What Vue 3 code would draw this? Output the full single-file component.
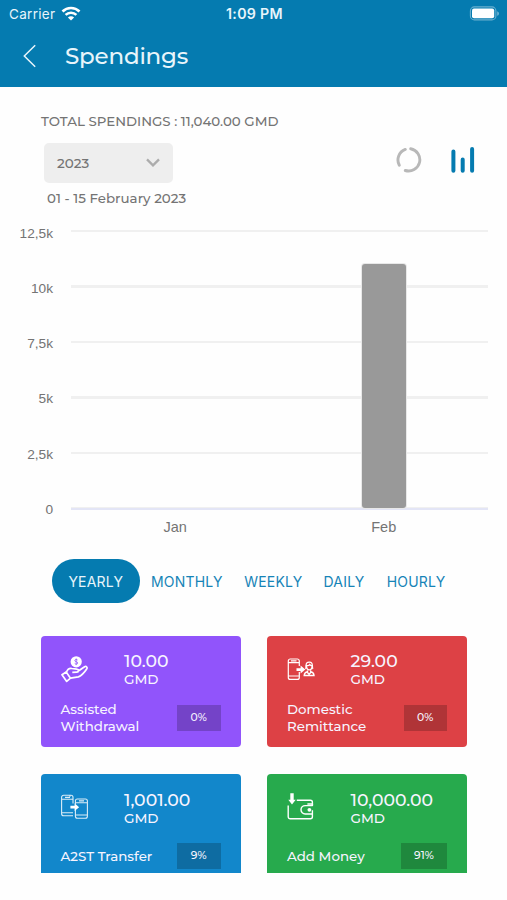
<script setup>
import { ref } from 'vue';

const activeTab = ref('YEARLY');
const tabs = ['YEARLY', 'MONTHLY', 'WEEKLY', 'DAILY', 'HOURLY'];

const ticks = ['12,5k', '10k', '7,5k', '5k', '2,5k', '0'];
const maxValue = 12500;
const months = [
  { label: 'Jan', value: 0 },
  { label: 'Feb', value: 10960 }
];

const cards = [
  { icon: 'hand', color: 'purple', amount: '10.00', label: 'Assisted Withdrawal', percent: '0%' },
  { icon: 'person', color: 'red', amount: '29.00', label: 'Domestic Remittance', percent: '0%' },
  { icon: 'phones', color: 'blue', amount: '1,001.00', label: 'A2ST Transfer', percent: '9%' },
  { icon: 'wallet', color: 'green', amount: '10,000.00', label: 'Add Money', percent: '91%' }
];

const barHeight = (value) => `${(value / maxValue) * 100}%`;
</script>

<template>
  <div class="screen">
    <header class="header">
      <div class="status-bar">
        <div class="carrier">
          <span>Carrier</span>
          <svg width="20" height="16" viewBox="0 0 20 16" fill="none" stroke="#fff">
            <path d="M1.5 5.4a12.3 12.3 0 0 1 17 0" stroke-width="2.7" />
            <path d="M4.6 8.9a7.8 7.8 0 0 1 10.8 0" stroke-width="2.6" />
            <path d="M10 14.6 6.9 11.5a4.4 4.4 0 0 1 6.2 0z" fill="#fff" stroke="none" />
          </svg>
        </div>
        <span class="time">1:09 PM</span>
        <div class="battery">
          <svg width="31" height="15" viewBox="0 0 31 15">
            <rect x="1.4" y=".9" width="25.5" height="13" rx="4" fill="none" stroke="#fff" stroke-opacity=".4" stroke-width="1.1" />
            <rect x="3" y="2.6" width="22.2" height="9.6" rx="2" fill="#fff" />
            <path d="M28.3 5.2c2 .8 2 3.8 0 4.6z" fill="#fff" fill-opacity=".5" />
          </svg>
        </div>
      </div>
      <div class="title-bar">
        <svg width="14" height="24" viewBox="0 0 14 24" fill="none" stroke="#e8f5fb" stroke-width="1.5">
          <path d="M13.2 1.3 2.3 12l10.9 10.7" />
        </svg>
        <h1>Spendings</h1>
      </div>
    </header>

    <section class="summary">
      <p class="total">TOTAL SPENDINGS : 11,040.00 GMD</p>
      <div class="controls">
        <button class="year-select">
          <span>2023</span>
          <svg width="14" height="9" viewBox="0 0 14 9" fill="none" stroke="#acacac" stroke-width="2.3">
            <path d="M1 1.4 7 7.4l6-6" />
          </svg>
        </button>
        <div class="chart-types">
          <svg width="26" height="26" viewBox="0 0 26 26" fill="none" stroke="#b8b8b8" stroke-width="2.9" stroke-linecap="round">
            <path d="M14.7 1.8a11.2 11.2 0 1 1-5.4 21.7" />
            <path d="M9.3 2.4a11.2 11.2 0 0 0-6 15.8" />
          </svg>
          <svg width="26" height="28" viewBox="0 0 26 28" fill="none" stroke="#057bb0" stroke-width="4" stroke-linecap="round">
            <path d="M3.4 5.6v19.2M12.7 13.5v11.3M22.1 2.9v21.9" />
          </svg>
        </div>
      </div>
      <p class="range">01 - 15 February 2023</p>
    </section>

    <section class="chart">
      <div class="y-axis">
        <span v-for="tick in ticks" :key="tick">{{ tick }}</span>
      </div>
      <div class="plot-column">
        <div class="plot">
          <div v-for="month in months" :key="month.label" class="slot">
            <div v-if="month.value" class="bar" :style="{ height: barHeight(month.value) }"></div>
          </div>
        </div>
        <div class="x-axis">
          <span v-for="month in months" :key="month.label">{{ month.label }}</span>
        </div>
      </div>
    </section>

    <nav class="tabs">
      <button
        v-for="tab in tabs"
        :key="tab"
        :class="['tab', tab.toLowerCase(), { active: activeTab === tab }]"
        @click="activeTab = tab"
      >
        {{ tab }}
      </button>
    </nav>

    <section class="cards">
      <article v-for="card in cards" :key="card.label" :class="['card', card.color]">
        <div class="card-top">
          <div class="icon">
            <svg v-if="card.icon === 'hand'" width="28" height="28" viewBox="0 0 28 28" fill="none" stroke="#fff" stroke-width="1.7" stroke-linejoin="round">
              <circle cx="15.2" cy="6.8" r="5.6" fill="#fff" stroke="none" />
              <path d="M16.6 5c-.6-.8-2.8-.7-2.8.6 0 1.5 3 .8 3 2.4 0 1.3-2.5 1.4-3.1.4M15.2 3.5v6.6" stroke="#9154fb" stroke-width=".8" />
              <path d="m1 19.7 4.2-2.7 4.3 6.2-3.8 3.2z" />
              <path d="M5.4 17.2c1.3-3.2 3-4.2 5.4-3.7l5 .6c2.3.2 2.1 2.9 0 3l-4.5.2M17 16.3l6.6-4.6c1.7-.9 3.3.9 2.1 2.3-2.1 3.2-4.9 6.4-8.3 7.9l-7.9 1.3" />
            </svg>
            <svg v-else-if="card.icon === 'person'" width="28" height="28" viewBox="0 0 28 28" fill="none" stroke="#fff" stroke-width="1.2">
              <path d="M12.3 11V6a2 2 0 0 0-2-2h-7a2 2 0 0 0-2 2v16.4a2 2 0 0 0 2 2h7a2 2 0 0 0 2-2V17M1.3 7.7h11M1.3 21h11M4 5.8h5.5" />
              <path d="M9.5 13.2h4.1v-2.6l4.7 4-4.7 4V16H9.5z" fill="#fff" stroke="none" />
              <path d="M18.5 14c1-.9.1-5.2 1.2-6 1.4-1.2 4-1.1 5.1.2.9 1 .2 5 1.2 5.8" stroke-width="1.3" />
              <path d="M19.4 10.8c1.8 0 2.9-.5 3.4-1.3.5.8 1.3 1.2 2.4 1.3-.1 5.4-5.7 5.4-5.8 0zM20.5 15.4v1.3c-2.5.4-3.2 1.6-3.3 3.8h9.8c-.1-2.2-.8-3.4-3.3-3.8v-1.3M20 17l2.1 2.3 2.1-2.3" stroke-width="1.4" />
            </svg>
            <svg v-else-if="card.icon === 'phones'" width="28" height="28" viewBox="0 0 28 28" fill="none" stroke="#fff" stroke-opacity=".85" stroke-width="1.1">
              <path d="M12 11.5V5.3a2 2 0 0 0-2-2H2.6a2 2 0 0 0-2 2v16.5a2 2 0 0 0 2 2H12M.6 7.3H12M.6 20.7H12M4 5.4h5M9 3.4v1.4" />
              <path d="M14.4 12V9a2 2 0 0 1 2-2h8a2 2 0 0 1 2 2v15.3a2 2 0 0 1-2 2h-8a2 2 0 0 1-2-2V18M14.4 10.7h12M14.4 23h12M18 8.9h5" />
              <path d="M9.4 13.8h4.2v-2.5l4.5 3.9-4.5 3.9v-2.5H9.4z" fill="#fff" stroke="none" />
            </svg>
            <svg v-else width="28" height="28" viewBox="0 0 28 28" fill="none" stroke="#fff" stroke-width="1.4" stroke-linejoin="round">
              <path d="M3.3 1.2h3.4v6.5h2L5 12.5 1.3 7.7h2z" fill="#fff" stroke="none" />
              <path d="M9.8 8.2h13.6a2 2 0 0 1 2 2v3.4h-7.2a4.2 4.2 0 0 0 0 8.4h7.2v2.8a2 2 0 0 1-2 2H3.2a2 2 0 0 1-2-2V13.5" />
              <path d="M25.4 13.6V12h-5M25.4 22v-3.8" />
              <circle cx="22.4" cy="17.8" r="1.9" fill="#fff" stroke="none" />
            </svg>
          </div>
          <div class="money">
            <strong>{{ card.amount }}</strong>
            <span>GMD</span>
          </div>
        </div>
        <div class="card-bottom">
          <span class="label">{{ card.label }}</span>
          <span class="percent">{{ card.percent }}</span>
        </div>
      </article>
    </section>
  </div>
</template>

<style>
body {
  background: #fefefe;
}
</style>

<style scoped>
.screen {
  width: 507px;
  height: 900px;
  overflow: hidden;
  font-family: Montserrat, Inter, sans-serif;
  color: #747474;
}

p,
h1 {
  margin: 0;
}

button {
  border: none;
  font-family: inherit;
  cursor: pointer;
}

svg {
  display: block;
  flex: none;
}

.header {
  height: 86.5px;
  box-sizing: border-box;
  background: #057bb0;
  color: #e8f5fb;
}

.status-bar {
  display: grid;
  grid-template-columns: 1fr auto 1fr;
  align-items: center;
  height: 27px;
  padding: 0 7px 0 9px;
  font-family: Inter, sans-serif;
  font-size: 13.5px;
}

.carrier {
  display: flex;
  align-items: center;
  gap: 6px;
  letter-spacing: 0.3px;
}

.time {
  font-weight: 600;
  font-size: 14.2px;
  letter-spacing: 0.3px;
}

.battery {
  display: flex;
  justify-content: flex-end;
}

.title-bar {
  display: flex;
  align-items: center;
  gap: 29px;
  height: 58px;
  padding-left: 22px;
}

h1 {
  font-size: 23px;
  font-weight: 500;
  letter-spacing: -0.2px;
}

.summary {
  height: 143.5px;
  box-sizing: border-box;
  padding: 25.5px 31.5px 0 41px;
}

.total {
  font-size: 13.35px;
  line-height: 18px;
  font-weight: 500;
}

.controls {
  display: flex;
  justify-content: space-between;
  padding: 12.5px 0 0 3px;
}

.year-select {
  display: flex;
  align-items: center;
  justify-content: space-between;
  width: 129px;
  height: 40px;
  padding: 0 13px;
  border-radius: 5px;
  background: #eeeeee;
  color: #747474;
  font-size: 13.5px;
  font-weight: 500;
}

.chart-types {
  display: flex;
  align-items: center;
  gap: 28px;
  height: 34px;
}

.range {
  padding: 6px 0 0 6px;
  font-size: 13.4px;
  line-height: 18px;
  font-weight: 500;
}

.chart {
  display: flex;
  height: 314px;
  font-family: "Liberation Sans", Arial, sans-serif;
}

.y-axis {
  display: flex;
  flex-direction: column;
  width: 53px;
  margin-right: 18px;
  padding-top: 3.6px;
  text-align: right;
  font-size: 13.7px;
}

.y-axis span {
  flex: none;
  height: 55.3px;
  line-height: 0;
}

.plot-column {
  width: 417px;
}

.plot {
  display: flex;
  height: 277.5px;
  border-bottom: 2px solid #e3e5f6;
  background: repeating-linear-gradient(to bottom, #f0f0f0 0, #f0f0f0 2px, transparent 2px, transparent 55.5px);
}

.slot {
  flex: 1;
  display: flex;
  align-items: flex-end;
  justify-content: center;
}

.bar {
  width: 44px;
  border-radius: 3px;
  background: #999999;
  box-shadow: 0 0 0 1px #e8e8e8;
}

.x-axis {
  display: flex;
  font-size: 14.5px;
  line-height: 17px;
  padding-top: 9.5px;
}

.x-axis span {
  flex: 1;
  text-align: center;
}

.tabs {
  display: flex;
  align-items: center;
  height: 44px;
  margin: 15px 0 33px 51.5px;
}

.tab {
  height: 44px;
  padding: 0;
  border-radius: 28px;
  background: transparent;
  color: #1684b7;
  font-family: Inter, sans-serif;
  font-size: 14px;
  letter-spacing: 0.2px;
}

.tab.active {
  background: #057bb0;
  color: #e8f5fb;
}

.yearly {
  width: 88.5px;
}

.monthly {
  width: 93.5px;
}

.weekly {
  width: 79.5px;
}

.daily {
  width: 62px;
}

.hourly {
  width: 82px;
}

.cards {
  display: grid;
  grid-template-columns: 200px 200px;
  gap: 27px 26.5px;
  height: 237px;
  overflow: hidden;
  padding-left: 40.5px;
}

.card {
  box-sizing: border-box;
  height: 110.5px;
  padding: 15px 20px 0;
  border-radius: 4px;
  color: #f7f4ff;
}

.purple {
  background: #9154fb;
}

.red {
  background: #dd4145;
}

.blue {
  background: #1287cb;
}

.green {
  background: #27aa4d;
}

.card-top {
  display: flex;
  height: 49.5px;
}

.icon {
  width: 63.5px;
  padding-top: 3.5px;
}

.money {
  display: flex;
  flex-direction: column;
}

.money strong {
  font-size: 17.3px;
  line-height: 20px;
  font-weight: 500;
}

.money span {
  font-size: 13.5px;
  line-height: 16px;
  font-weight: 500;
}

.blue .money,
.green .money {
  padding-top: 1px;
}

.card-bottom {
  display: flex;
  align-items: center;
  justify-content: space-between;
  height: 34px;
}

.label {
  width: 100px;
  font-size: 13.4px;
  line-height: 16.5px;
  font-weight: 500;
}

.percent {
  width: 43.5px;
  height: 26px;
  line-height: 26px;
  text-align: center;
  font-size: 10.8px;
  font-weight: 500;
  background: rgba(0, 0, 0, 0.2);
}

.blue .card-bottom,
.green .card-bottom {
  padding-top: 1px;
}

.green .percent {
  width: 46px;
}
</style>
